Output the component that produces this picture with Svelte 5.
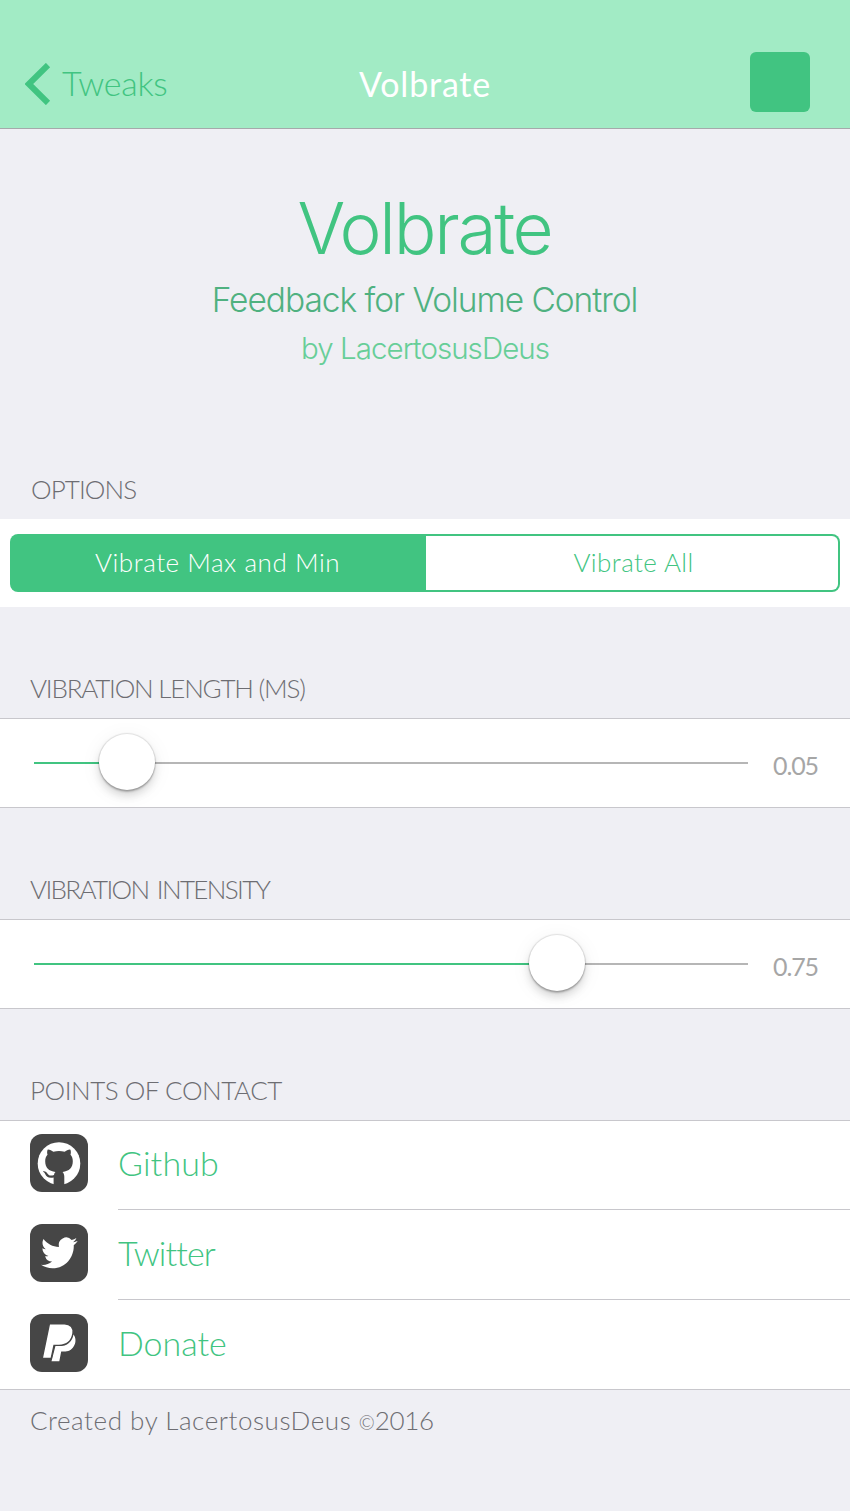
<script>
  const sliders = [
    { label: 'VIBRATION LENGTH (MS)', cls: 'length', value: '0.05', knob: 65 },
    { label: 'VIBRATION INTENSITY', cls: 'intensity', value: '0.75', knob: 495 },
  ];
</script>

<main>
  <header>
    <div class="back">
      <svg width="26" height="42" viewBox="0 0 26 42"><path d="M23 2 3.8 21l19.2 19" fill="none" stroke="#41c481" stroke-width="6" /></svg>
      <span>Tweaks</span>
    </div>
    <span class="title">Volbrate</span>
    <div class="end"><i class="square"></i></div>
  </header>

  <section class="hero">
    <h1>Volbrate</h1>
    <h2>Feedback for Volume Control</h2>
    <p>by LacertosusDeus</p>
  </section>

  <h3 class="options">OPTIONS</h3>
  <div class="panel">
    <div class="segments">
      <div class="on">Vibrate Max and Min</div>
      <div class="off">Vibrate All</div>
    </div>
  </div>

  {#each sliders as s}
    <h3 class={s.cls}>{s.label}</h3>
    <div class="slider">
      <div class="track">
        <div class="fill" style="width:{s.knob}px"></div>
        <div class="knob"></div>
        <div class="rest"></div>
      </div>
      <span class="value">{s.value}</span>
    </div>
  {/each}

  <h3 class="contact">POINTS OF CONTACT</h3>
  <ul>
    <li>
      <div class="icon">
        <svg viewBox="0 0 58 58" width="58" height="58">
          <circle cx="29" cy="29.5" r="21.3" fill="#fff" />
          <path fill="#464646" d="M23.6 52V43.5C18.5 44.6 16.6 42.6 15.3 40.2 14.7 38.9 13.8 38.2 12.8 37.5 14.9 36.8 16.5 38 17.6 39.7 19.2 42.2 21.7 41.7 24 40.9 24.3 39.5 24.9 38.6 25.5 38.1 18.8 37 15.2 34 15.2 27.3 15.2 24.5 16 22.4 17.5 20.8 16.9 18.7 17 16.7 17.8 15.4 19.8 15.3 21.7 16.5 23.4 17.7 27 16.9 31 16.9 34.6 17.7 36.3 16.5 38.2 15.3 40.2 15.4 41 16.7 41.1 18.7 40.5 20.8 42 22.4 42.8 24.5 42.8 27.3 42.8 34 39.2 37 32.5 38.1 33.6 39.1 34.3 40.6 34.3 42.7V52Z" />
        </svg>
      </div>
      <div class="cell github">Github</div>
    </li>
    <li>
      <div class="icon">
        <svg viewBox="0 0 58 58" width="58" height="58">
          <path transform="translate(11 9.9) scale(1.52 1.58)" fill="#fff" d="M23.95 4.57a10 10 0 0 1-2.82.78 4.96 4.96 0 0 0 2.16-2.73c-.95.56-2 .96-3.13 1.19a4.92 4.92 0 0 0-8.38 4.48C7.69 8.1 4.07 6.13 1.64 3.16a4.82 4.82 0 0 0-.67 2.48c0 1.71.87 3.21 2.19 4.1a4.9 4.9 0 0 1-2.23-.62v.06a4.92 4.92 0 0 0 3.95 4.83 5 5 0 0 1-2.21.08 4.94 4.94 0 0 0 4.6 3.42A9.87 9.87 0 0 1 0 19.54a13.99 13.99 0 0 0 7.56 2.21c9.05 0 14-7.5 14-13.98 0-.21 0-.42-.02-.63a9.94 9.94 0 0 0 2.46-2.55z" />
        </svg>
      </div>
      <div class="cell twitter">Twitter</div>
    </li>
    <li>
      <div class="icon">
        <svg viewBox="0 0 58 58" width="58" height="58" fill="#fff">
          <path d="M27 26 43.5 20.5C48.5 27 43.5 37.2 35.5 37.5H31.2L29.3 47.3H21.5Z" />
          <path stroke="#464646" stroke-width="1.4" d="M19.4 9.8H34.5C40.5 9.8 44 14 43 19.5 41.7 27 37 31.4 29 31.4H24L21.2 44.5H12.2Z" />
        </svg>
      </div>
      <div class="cell">Donate</div>
    </li>
  </ul>
  <footer>Created by LacertosusDeus <span class="year"><small>©</small>2016</span></footer>
</main>

<style>
  :global(body) { margin: 0; background: #efeff4; }
  main { width: 850px; height: 1511px; overflow: hidden; background: #efeff4; color: #6d6d72; font-family: Lato, sans-serif; font-weight: 300; }
  header { box-sizing: border-box; height: 129px; padding-top: 36px; display: grid; grid-template-columns: 1fr auto 1fr; align-items: center; background: #a2ebc5; border-bottom: 1px solid #a5a9ab; }
  .back { display: flex; align-items: center; gap: 11px; padding: 3px 0 0 25px; color: #41c481; font-size: 34px; letter-spacing: -.3px; }
  .back svg { display: block; }
  .back span { padding-bottom: 2px; }
  .title { color: #fff; font-size: 34px; font-weight: 400; letter-spacing: .8px; padding-top: 2px; }
  .end { display: flex; justify-content: flex-end; padding-right: 40px; }
  .square { width: 60px; height: 60px; border-radius: 6px; background: #41c481; }
  .hero { height: 340px; padding: 57px 1px 0 0; box-sizing: border-box; text-align: center; font-family: Inter, sans-serif; white-space: nowrap; }
  h1, h2, h3, p, ul { margin: 0; padding: 0; font-weight: 300; }
  h1 { font-size: 71px; line-height: 84px; color: #41c481; letter-spacing: -2.25px; }
  h2 { margin-top: 1px; font-size: 33.5px; line-height: 58px; color: #4fb180; letter-spacing: -1.04px; }
  p { font-size: 29.5px; line-height: 38px; color: #67ce98; letter-spacing: -.95px; padding-left: 1px; }
  h3 { box-sizing: border-box; height: 111px; padding: 61px 30px 0; font-size: 26px; line-height: 40px; }
  h3.options { height: 50px; padding: 0 31px; letter-spacing: -.9px; }
  h3.length { letter-spacing: -1.2px; }
  h3.intensity { letter-spacing: -1.65px; word-spacing: 3px; }
  h3.contact { letter-spacing: -.46px; }
  .panel { padding: 15px 10px; background: #fff; }
  .segments { box-sizing: border-box; height: 58px; display: grid; grid-template-columns: 414px 412px; padding: 2px; border-radius: 8px; background: #41c481; font-size: 26px; }
  .segments div { line-height: 52px; text-align: center; }
  .on { color: #fff; letter-spacing: .55px; padding-right: 3px; }
  .off { background: #fff; color: #41c481; border-radius: 0 6px 6px 0; letter-spacing: .42px; padding-left: 3px; }
  .slider { box-sizing: border-box; height: 90px; border-top: 1px solid #c8c7cc; border-bottom: 1px solid #c8c7cc; background: #fff; display: flex; align-items: center; padding-left: 34px; gap: 25px; }
  .track { width: 714px; height: 56px; display: flex; align-items: center; margin-top: -3px; }
  .fill { height: 2px; margin-top: 2px; background: #41c481; }
  .knob { width: 56px; height: 56px; border-radius: 50%; background: #fff; box-shadow: 0 0 1px 1px rgba(0,0,0,.1), 0 2px 2px rgba(0,0,0,.22), 0 6px 8px rgba(0,0,0,.13), 0 3px 22px rgba(0,0,0,.06); z-index: 1; }
  .rest { flex: 1; height: 2px; margin-top: 2px; background: #b6b6b6; }
  .value { color: #a6a6a6; font-size: 25px; font-weight: 400; padding-top: 3px; letter-spacing: -1.1px; }
  ul { list-style: none; border-top: 1px solid #c8c7cc; border-bottom: 1px solid #c8c7cc; background: #fff; }
  li { display: flex; padding-left: 30px; gap: 30px; height: 88px; }
  li + li { height: 90px; }
  .icon { width: 58px; height: 58px; margin-top: 13px; border-radius: 12px; background: #464646; overflow: hidden; }
  li + li .icon { margin-top: 15px; }
  .icon svg { display: block; }
  .cell { flex: 1; font-size: 34px; line-height: 85px; color: #41c481; }
  .github { line-height: 83px; letter-spacing: .15px; }
  .twitter { letter-spacing: -.9px; }
  li + li .cell { border-top: 1px solid #c8c7cc; }
  footer { padding: 10px 30px 0; font-size: 26px; line-height: 40px; letter-spacing: .55px; }
  .year { letter-spacing: -.4px; }
  small { font-size: 19px; letter-spacing: 0; }
</style>
